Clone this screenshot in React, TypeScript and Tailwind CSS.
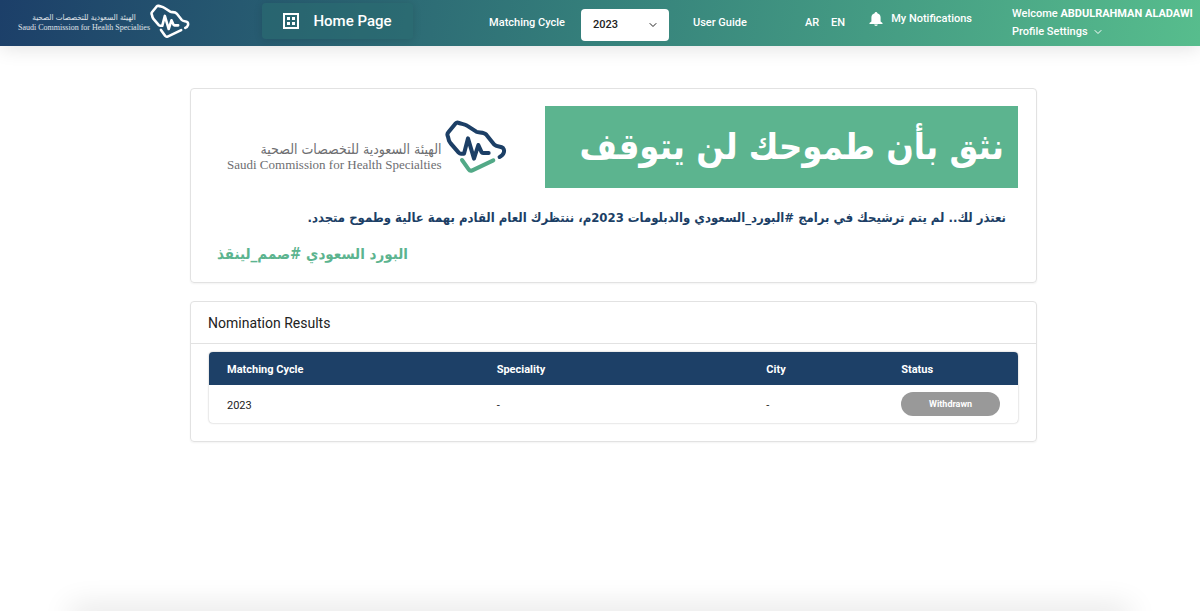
import { useState } from "react";
import { ChevronDown } from "lucide-react";

const RESULTS = [
  { cycle: "2023", speciality: "-", city: "-", status: "Withdrawn" },
];

function Emblem({ className, outline, check }: { className: string; outline: string; check: string }) {
  return (
    <svg viewBox="796 114 186 162" className={className} fill="none" strokeWidth="12" strokeLinecap="round" strokeLinejoin="round" aria-hidden="true">
      <path
        className={outline}
        d="M960 225C974 218 976 205 970 198C963 191 951 196 944 188L920 158C912 149 898 153 890 149L862 131C855 126 844 126 835 122Q831 121 827 125L806 151Q801 157 805 164L808 176Q810 180 813 184L837 212Q840 215 844 215H853L865 169L883 230L896 189L906 211Q907 213 910 213H927"
      />
      <path className={check} d="M847 234L867 262Q871 268 878 265L941 235" />
    </svg>
  );
}

function GridIcon() {
  return (
    <svg viewBox="0 0 16 16" className="h-4 w-4" fill="none" stroke="currentColor" aria-hidden="true">
      <rect x="1" y="1" width="14" height="14" strokeWidth="2" />
      <path d="M4 4h3v3H4zM9 4h3v3H9zM4 9h3v3H4zM9 9h3v3H9z" fill="currentColor" stroke="none" />
    </svg>
  );
}

function BellIcon() {
  return (
    <svg viewBox="0 0 14 14" className="h-[14px] w-[14px]" fill="currentColor" aria-hidden="true">
      <path d="M7 0a1.4 1.4 0 0 0-1.4 1.2C3.5 1.8 2.4 3.4 2.4 5.5V9.500L.5 11v1h13v-1L11.600 9.500V5.500c0-2.100-1.100-3.700-3.200-4.300A1.400 1.400 0 0 0 7 0zM5.200 12.600a1.800 1.400 0 0 0 3.600 0z" />
    </svg>
  );
}

function Header() {
  const [cycle, setCycle] = useState("2023");

  return (
    <header className="flex h-[46px] items-center bg-linear-[100deg] from-[#1c3f69] via-[#35807b] to-[#57bd8d] pl-4 pr-2 text-[11px] font-medium text-white shadow-[0_2px_20px_rgba(0,0,0,0.12)]">
      <a href="#" className="flex w-[174px] items-center justify-end pb-1">
        <span className="pt-1 text-center font-['Liberation_Serif',serif] text-[8px] leading-[10px] font-normal whitespace-nowrap text-white/85">
          <span dir="rtl" lang="ar" className="block font-['DejaVu_Sans_Condensed','DejaVu_Sans',sans-serif]">
            الهيئة السعودية للتخصصات الصحية
          </span>
          <span className="block">Saudi Commission for Health Specialties</span>
        </span>
        <Emblem className="h-[35px] w-10 shrink-0" outline="stroke-white" check="stroke-white" />
      </a>

      <div className="ml-[72px] pb-1">
        <a href="#" className="flex h-9 w-[151px] items-center justify-center gap-[14px] rounded-sm bg-[#2a6b70]/60 text-[15px] shadow-[0_1px_8px_rgba(0,0,0,0.12)]">
          <GridIcon />
          Home Page
        </a>
      </div>

      <nav className="ml-auto flex items-center">
        <label htmlFor="cycle" className="mr-4">Matching Cycle</label>
        <div className="relative mr-6 pt-1">
          <select
            id="cycle"
            value={cycle}
            onChange={(e) => setCycle(e.target.value)}
            className="block h-8 w-[88px] appearance-none rounded-sm bg-white px-3 text-[#222]"
          >
            <option>2023</option>
            <option>2022</option>
          </select>
          <ChevronDown className="pointer-events-none absolute top-3.5 right-2.5 h-3 w-3 text-[#222]" />
        </div>
        <a href="#" className="mr-[58px]">User Guide</a>
        <a href="#" className="mr-3">AR</a>
        <a href="#" className="mr-6">EN</a>
        <a href="#" className="mr-10 flex items-center gap-2 pb-2">
          <BellIcon />
          My Notifications
        </a>
        <div className="w-[180px] leading-[18px] whitespace-nowrap">
          <p>
            Welcome <span className="font-bold">ABDULRAHMAN ALADAWI</span>
          </p>
          <button type="button" className="flex items-center gap-1">
            Profile Settings
            <ChevronDown className="h-3 w-3" />
          </button>
        </div>
      </nav>
    </header>
  );
}

function Banner() {
  return (
    <section className="rounded-sm border border-[#e2e2e2] px-[18px] pt-[17px] pb-4 shadow-xs">
      <div className="flex items-center justify-between">
        <div className="flex items-center pl-[18px]">
          <div className="pt-5 text-right font-['Liberation_Serif',serif] text-[14px] leading-4 whitespace-nowrap text-[#6d6e71]">
            <p dir="rtl" lang="ar" className="font-['DejaVu_Sans_Condensed','DejaVu_Sans',sans-serif]">
              الهيئة السعودية للتخصصات الصحية
            </p>
            <p className="text-[13px]">Saudi Commission for Health Specialties</p>
          </div>
          <Emblem className="ml-1 h-[54px] w-[62px] shrink-0" outline="stroke-[#1c3f66]" check="stroke-[#52a987]" />
        </div>
        <h1
          dir="rtl"
          lang="ar"
          className="flex h-[82px] w-[473px] items-center bg-[#5cb48f] px-3.5 font-['DejaVu_Sans_Condensed','DejaVu_Sans',sans-serif] text-[36px] font-bold whitespace-nowrap text-white"
        >
          نثق بأن طموحك لن يتوقف
        </h1>
      </div>
      <div className="px-2 font-['DejaVu_Sans_Condensed','DejaVu_Sans',sans-serif] font-bold whitespace-nowrap">
        <p dir="rtl" lang="ar" className="mt-[18px] px-1 text-[13px] leading-6 text-[#1c3f66]">
          نعتذر لك.. لم يتم ترشيحك في برامج #البورد_السعودي والدبلومات 2023م، ننتظرك العام القادم بهمة عالية وطموح متجدد.
        </p>
        <p dir="rtl" lang="ar" className="mt-3 text-left text-[15px] leading-6 text-[#5cb48f]">
          البورد السعودي #صمم_لينقذ
        </p>
      </div>
    </section>
  );
}

function Results() {
  return (
    <section className="rounded-sm border border-[#e2e2e2] shadow-xs">
      <h2 className="border-b border-[#e2e2e2] px-[17px] pt-px text-[14px] leading-10">Nomination Results</h2>
      <div className="px-[18px] pt-2 pb-[18px]">
        <div className="overflow-hidden rounded-sm shadow-[0_0_2px_rgba(0,0,0,0.3)]">
          <table className="w-full table-fixed text-left text-[11px]">
            <thead className="bg-[#1d4067] text-white">
              <tr className="h-[33px]">
                <th className="w-1/3 px-[18px] pt-1">Matching Cycle</th>
                <th className="w-1/3 px-[18px] pt-1">Speciality</th>
                <th className="w-1/6 px-[18px] pt-1">City</th>
                <th className="w-1/6 px-[18px] pt-1">Status</th>
              </tr>
            </thead>
            <tbody>
              {RESULTS.map((row) => (
                <tr key={row.cycle} className="h-[38px]">
                  <td className="px-[18px] pt-1">{row.cycle}</td>
                  <td className="px-[18px] pt-1">{row.speciality}</td>
                  <td className="px-[18px] pt-1">{row.city}</td>
                  <td className="px-[18px]">
                    <span className="block rounded-full bg-[#999] text-center text-[9px] leading-6 font-bold text-white">
                      {row.status}
                    </span>
                  </td>
                </tr>
              ))}
            </tbody>
          </table>
        </div>
      </div>
    </section>
  );
}

export default function App() {
  return (
    <div className="flex min-h-screen flex-col overflow-hidden bg-white font-[Roboto,sans-serif] text-[#222]">
      <Header />
      <main className="mr-[163px] ml-[190px] flex flex-col gap-[18px] pt-[42px]">
        <Banner />
        <Results />
      </main>
      <footer className="mx-20 mt-auto shadow-[0_6px_30px_10px_rgba(0,0,0,0.12)]" />
    </div>
  );
}
